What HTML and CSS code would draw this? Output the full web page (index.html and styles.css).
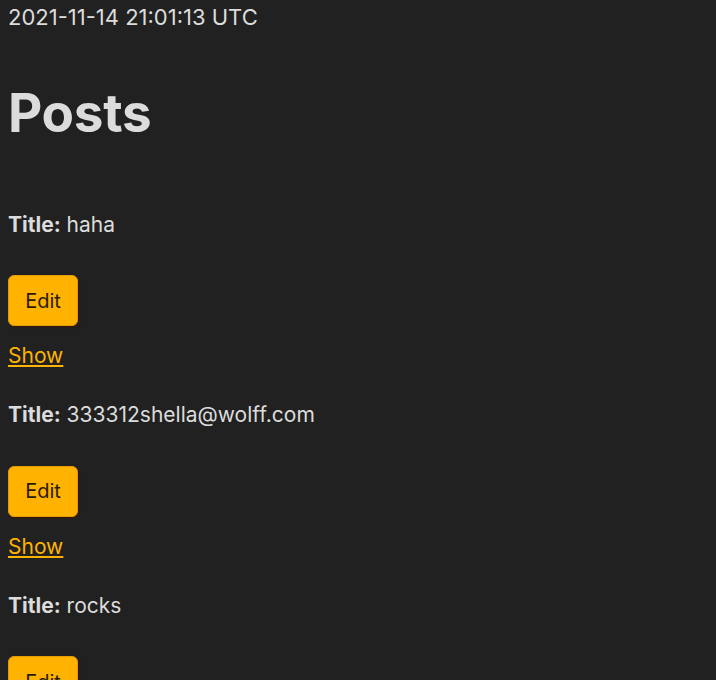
FILE: index.html
```
<!DOCTYPE html>
<html>
<head>
<meta charset="utf-8">
<link rel="stylesheet" href="styles.css">
</head>
<body>
<p class="time">2021-11-14 21:01:13 UTC</p>
<h1 class="title">Posts</h1>
<div class="posts">
  <div class="post">
    <p class="line"><strong>Title:</strong> haha</p>
    <button class="btn">Edit</button>
    <a class="show" href="#">Show</a>
  </div>
  <div class="post">
    <p class="line"><strong>Title:</strong> 333312shella@wolff.com</p>
    <button class="btn">Edit</button>
    <a class="show" href="#">Show</a>
  </div>
  <div class="post">
    <p class="line"><strong>Title:</strong> rocks</p>
    <button class="btn">Edit</button>
    <a class="show" href="#">Show</a>
  </div>
</div>
</body>
</html>
```
FILE: styles.css
```
html, body {
  background: #212121;
}
body {
  margin: 8px;
  color: #dcdcdc;
  font-family: Inter, "Noto Sans", sans-serif;
  font-size: 21px;
  line-height: 1.5;
}
.time {
  margin: 0;
  font-size: 22px;
  line-height: 18px;
}
.title {
  margin: 56px 0 0;
  font-size: 53px;
  line-height: 1.2;
  font-weight: 700;
  letter-spacing: -0.3px;
}
.posts {
  margin-top: 63px;
}
.post {
  display: flex;
  flex-direction: column;
  align-items: flex-start;
}
.line {
  margin: 0;
}
.line strong {
  font-weight: 700;
}
.btn {
  margin-top: 35px;
  width: 70px;
  height: 51px;
  border: 1px solid #e09c00;
  border-radius: 6px;
  background: #ffb300;
  color: #2a1a00;
  font-family: inherit;
  font-size: 20px;
  box-shadow: 1px 1px 2px rgba(60,20,0,0.8);
  padding: 0;
}
.show {
  margin-top: 17px;
  margin-bottom: 31px;
  color: #ffb300;
  line-height: 1.2;
}
```
